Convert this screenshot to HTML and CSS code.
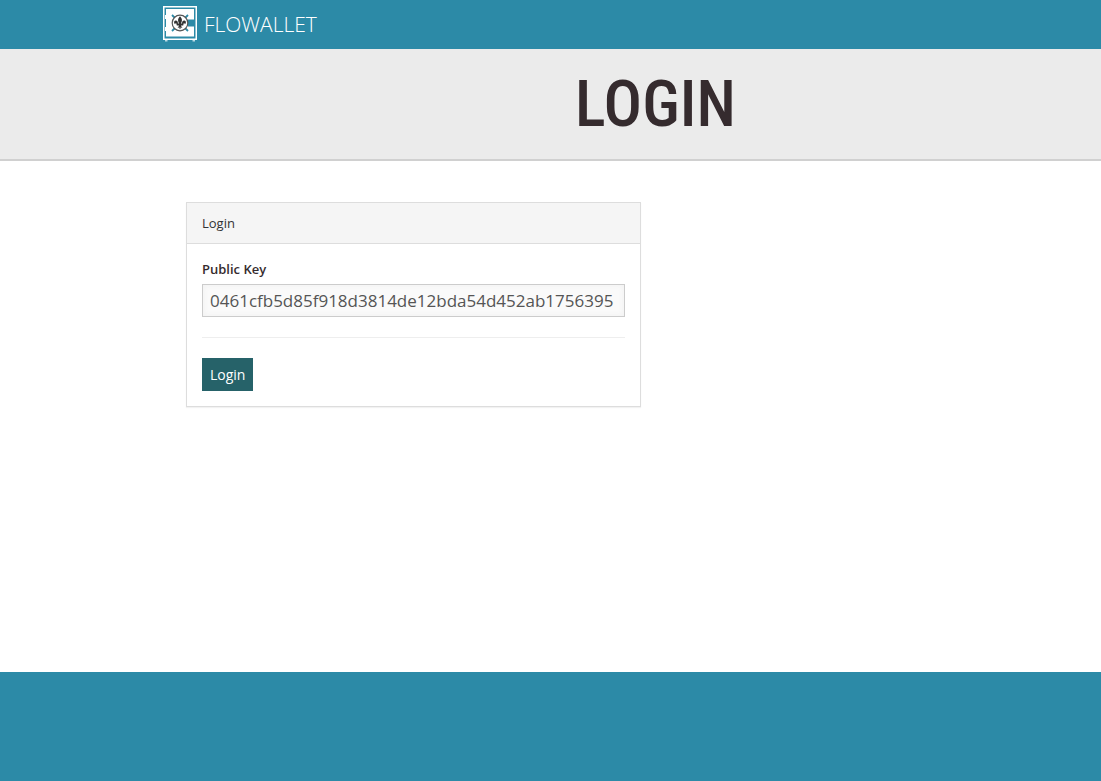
FILE: index.html
```html
<!DOCTYPE html>
<html lang="en">
<head>
<meta charset="utf-8">
<meta name="viewport" content="width=device-width, initial-scale=1">
<title>Flowallet - Login</title>
<link rel="stylesheet" href="styles.css">
</head>
<body>
<header class="navbar">
  <a class="brand" href="#">
    <svg class="brand-icon" viewBox="0 0 34 36" aria-hidden="true">
      <path fill="#b9dae4" d="M2 34h2.500v1.500H2zM29.500 34H32v1.500h-2.500z"/>
      <rect x=".75" y=".75" width="32.500" height="32.500" fill="#2c8aa7" stroke="#fff" stroke-width="1.500"/>
      <path fill="#fff" d="M3 3h28v27.500H3zM2 9h1v4H2zM2 21h1v4H2z"/>
      <path fill="#2c8aa7" d="M25 13.500h6v7h-6z"/>
      <path stroke="#2c8aa7" stroke-width="1.800" d="m9 9 3 3m10 10 3 3m0-16-3 3M12 22l-3 3"/>
      <circle cx="17" cy="17" r="7.800" fill="#fff" stroke="#555" stroke-width="1.200"/>
      <path transform="translate(17 17) scale(1.150) translate(-17 -16.800)" fill="#333" d="M17 11c1.100 1.300 1.700 2.300 1.700 3.300s-.6 1.900-.8 3h.9c-.1-1.900.9-3 2.100-2.700 1.500.3 1.700 2.200.4 3.300-.1-.9-.9-1-1.200-.4-.2.500 0 1-.3 1.500h-1.900c.1 1 .8 1.500 1.400 1.600-.8.500-1.400.2-1.700-.2-.1.900-.3 1.600-.6 2.100-.3-.5-.5-1.200-.6-2.100-.3.400-.9.700-1.700.2.600-.1 1.300-.6 1.400-1.600h-1.900c-.3-.5-.1-1-.3-1.500-.3-.6-1.100-.5-1.200.4-1.300-1.100-1.100-3 .4-3.300 1.200-.3 2.200.8 2.100 2.700h.9c-.2-1.100-.8-2-.8-3s.6-2 1.700-3.300z"/>
    </svg>
    <span>FLOWALLET</span>
  </a>
</header>
<div class="banner"><h1 class="banner-title">LOGIN</h1></div>
<main class="content">
  <form class="panel">
    <h2 class="panel-heading">Login</h2>
    <div class="panel-body">
      <label class="field-label" for="public-key">Public Key</label>
      <input class="field-input" id="public-key" type="text" value="0461cfb5d85f918d3814de12bda54d452ab1756395">
      <hr class="divider">
      <button class="button" type="button">Login</button>
    </div>
  </form>
</main>
<footer class="footer"></footer>
</body>
</html>
```
FILE: styles.css
```css
* { box-sizing: border-box; }

body {
  display: flex;
  flex-direction: column;
  min-height: 100vh;
  margin: 0;
  background: #fff;
  color: #352b2e;
  font: 14px/20px "Open Sans", sans-serif;
}

.navbar {
  display: flex;
  height: 49px;
  padding: 0 0 1px 163px;
  background: #2c8aa7;
}

.brand {
  display: flex;
  align-items: center;
  gap: 7px;
  padding-bottom: 1px;
  color: #fff;
  font: 300 21px/24px "Open Sans", sans-serif;
  text-decoration: none;
}

.brand-icon { width: 34px; height: 36px; }

.banner {
  height: 112px;
  padding: 20px 0 0 210px;
  border-bottom: 2px solid #d0d0d0;
  background: #ebebeb;
  text-align: center;
}

.banner-title {
  margin: 0;
  font: 500 64px/72px "Roboto Condensed", "Open Sans Condensed", "Arial Narrow", Roboto, sans-serif;
}

.content {
  flex: 1;
  padding: 41px 15px 41px 186px;
}

.panel {
  max-width: 455px;
  border: 1px solid #ddd;
  background: #fff;
  box-shadow: 0 1px 1px rgba(0, 0, 0, .05);
}

.panel-heading {
  margin: 0;
  padding: 10px 15px;
  border-bottom: 1px solid #ddd;
  background: #f5f5f5;
  color: #333;
  font: 400 13px/20px "Open Sans", sans-serif;
}

.panel-body { padding: 15px; }

.field-label {
  display: block;
  margin-bottom: 5px;
  font-size: 13px;
  font-weight: 600;
}

.field-input {
  display: block;
  width: 100%;
  height: 33px;
  padding: 0 7px;
  border: 1px solid #ccc;
  border-radius: 0;
  background: #fafafa;
  box-shadow: inset 0 0 6px #f0f0f0;
  color: #555;
  font: 17px/24px "Open Sans", sans-serif;
}

.divider {
  margin: 20px 0;
  border: 0;
  border-top: 1px solid #eee;
}

.button {
  display: block;
  height: 33px;
  padding: 0 8px;
  border: 0;
  background: #266269;
  color: #fff;
  font: 14px/24px "Open Sans", sans-serif;
}

.footer {
  height: 109px;
  background: #2c8aa7;
}
```
